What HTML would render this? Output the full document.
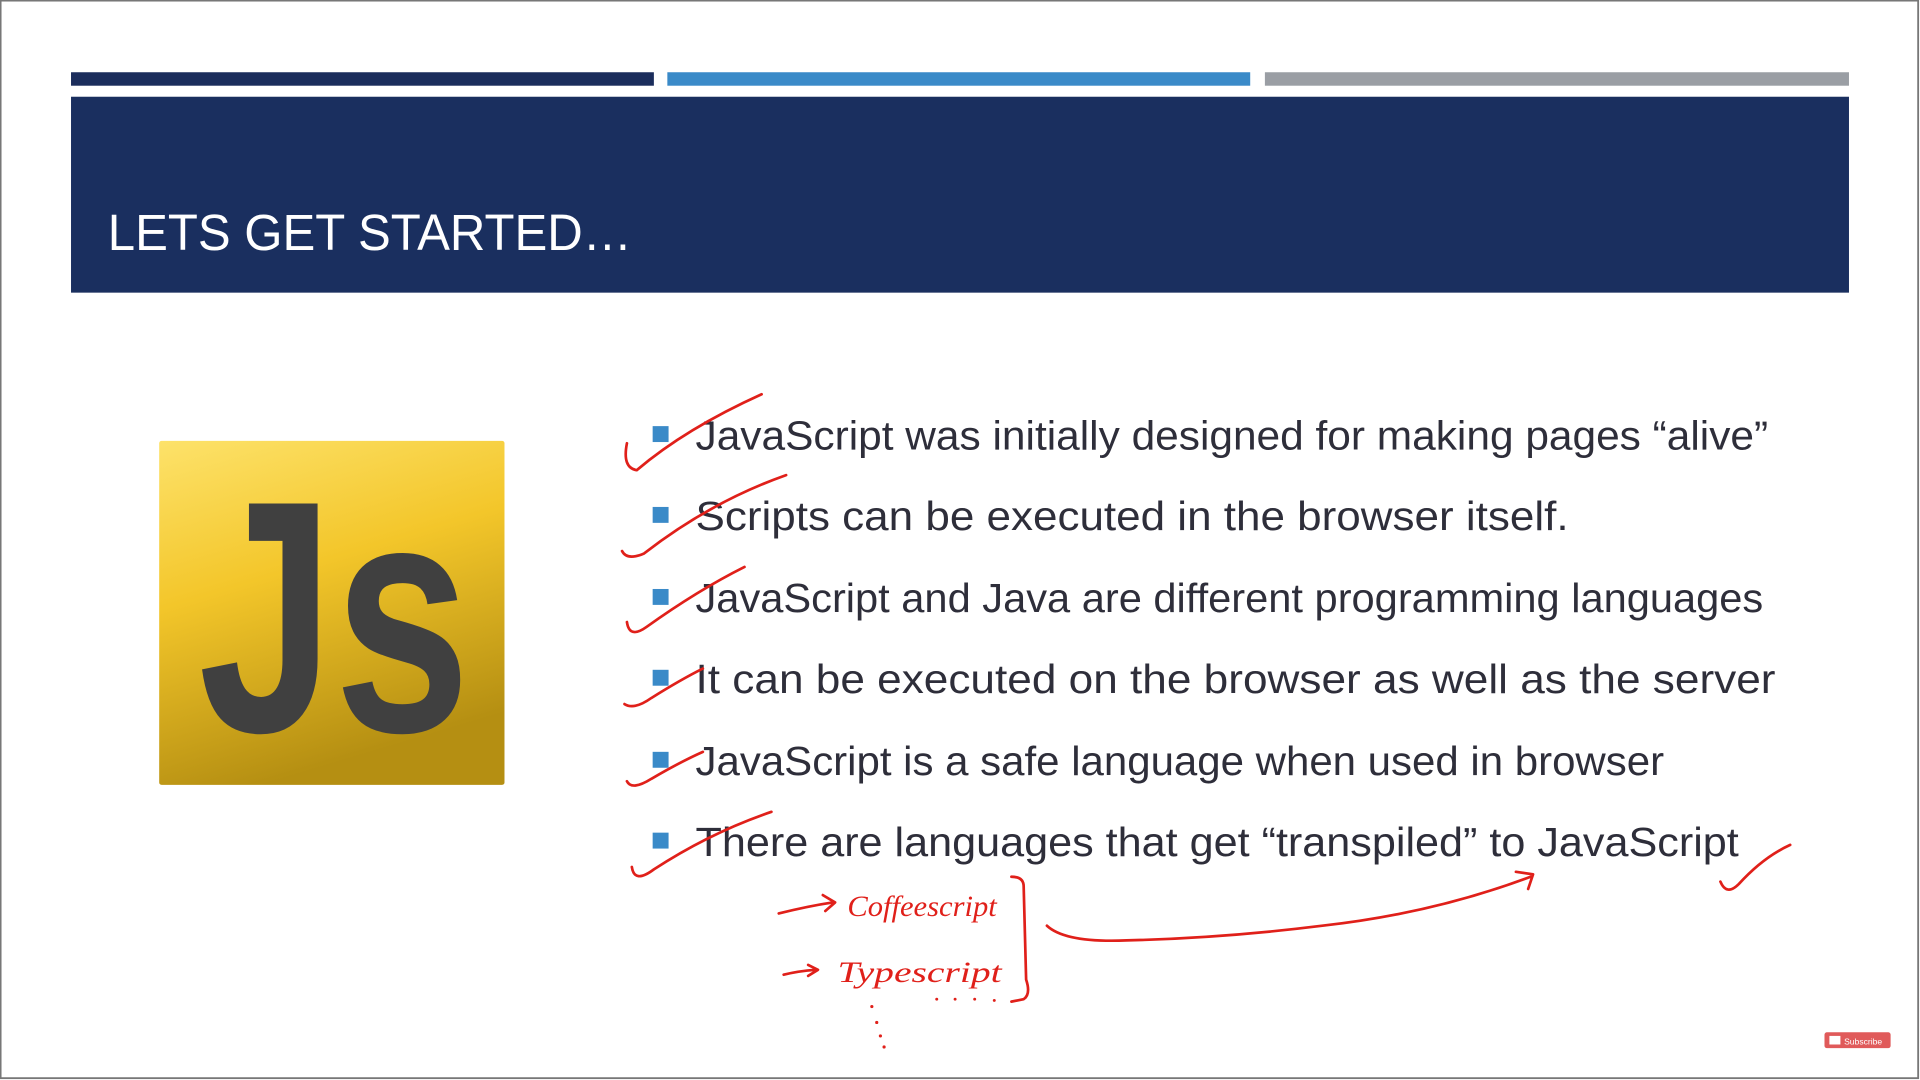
<!DOCTYPE html>
<html><head><meta charset="utf-8"><style>
html,body{margin:0;padding:0;background:#fff;width:1920px;height:1080px;overflow:hidden}
svg{display:block}
</style></head><body>
<svg width="1920" height="1080" viewBox="0 0 1568 882" xmlns="http://www.w3.org/2000/svg">
<defs>
<linearGradient id="yg" x1="0" y1="0" x2="0.3" y2="1">
<stop offset="0" stop-color="#fde26a"/><stop offset="0.45" stop-color="#f3c62a"/><stop offset="1" stop-color="#b58f12"/>
</linearGradient>
</defs>
<rect x="0" y="0" width="1568" height="882" fill="#fff"/>
<rect x="0.5" y="0.5" width="1566" height="880" fill="none" stroke="#777" stroke-width="1.5"/>
<rect x="58" y="59" width="476" height="11" fill="#1b2d5c"/>
<rect x="545" y="59" width="476" height="11" fill="#3a8ac8"/>
<rect x="1033" y="59" width="477" height="11" fill="#9a9ea4"/>
<rect x="58" y="79" width="1452" height="160" fill="#1a2f5f"/>
<text x="88" y="204" font-family="Liberation Sans, sans-serif" font-size="42" fill="#fff" textLength="428" lengthAdjust="spacingAndGlyphs">LETS GET STARTED…</text>
<rect x="130" y="360" width="282" height="281" fill="url(#yg)" rx="2"/>
<text x="162" y="597" font-family="Liberation Sans, sans-serif" font-weight="bold" font-size="270" fill="#404040" textLength="222" lengthAdjust="spacingAndGlyphs">Js</text>
<g fill="#3a8ac8">
<rect x="533" y="348" width="13" height="13"/>
<rect x="533" y="414" width="13" height="13"/>
<rect x="533" y="481" width="13" height="13"/>
<rect x="533" y="547" width="13" height="13"/>
<rect x="533" y="614" width="13" height="13"/>
<rect x="533" y="680" width="13" height="13"/>
</g>
<g font-family="Liberation Sans, sans-serif" font-size="33" fill="#2e2e3a">
<text x="568" y="367" textLength="876" lengthAdjust="spacingAndGlyphs">JavaScript was initially designed for making pages “alive”</text>
<text x="568" y="433" textLength="713" lengthAdjust="spacingAndGlyphs">Scripts can be executed in the browser itself.</text>
<text x="568" y="500" textLength="872" lengthAdjust="spacingAndGlyphs">JavaScript and Java are different programming languages</text>
<text x="568" y="566" textLength="882" lengthAdjust="spacingAndGlyphs">It can be executed on the browser as well as the server</text>
<text x="568" y="633" textLength="791" lengthAdjust="spacingAndGlyphs">JavaScript is a safe language when used in browser</text>
<text x="568" y="699" textLength="852" lengthAdjust="spacingAndGlyphs">There are languages that get “transpiled” to JavaScript</text>
</g>
<g fill="none" stroke="#e0201a" stroke-width="2.2" stroke-linecap="round" stroke-linejoin="round">
<path d="M512 362 Q508 382 520 384 Q560 350 622 322"/>
<path d="M508 450 Q512 458 526 452 Q580 410 642 388"/>
<path d="M512 508 Q514 522 528 512 Q570 482 608 463"/>
<path d="M510 575 Q518 580 532 570 Q556 555 574 546"/>
<path d="M512 638 Q516 646 532 636 Q556 622 574 614"/>
<path d="M516 708 Q518 722 534 710 Q580 680 630 663"/>
<path d="M1405 720 Q1410 732 1420 722 Q1440 700 1462 690"/>
<path d="M636 746 Q660 740 680 737 M672 731 L682 737 L674 744"/>
<path d="M640 796 Q652 793 666 792 M660 788 L668 792 L660 797"/>
<path d="M826 716 Q836 716 836 724 L838 800 Q842 812 836 816 L826 818"/>
<path d="M855 756 Q870 770 920 768 Q1000 766 1080 756 Q1170 746 1250 716 M1238 712 L1252 714 L1248 726"/>
</g>
<g font-family="Liberation Serif, serif" font-style="italic" font-size="24" fill="#e0201a">
<text x="692" y="748" textLength="122" lengthAdjust="spacingAndGlyphs">Coffeescript</text>
<text x="684" y="802" textLength="134" lengthAdjust="spacingAndGlyphs">Typescript</text>
</g>
<g fill="#e0201a">
<circle cx="712" cy="822" r="1.3"/><circle cx="716" cy="835" r="1.3"/><circle cx="719" cy="846" r="1.3"/><circle cx="722" cy="855" r="1.3"/>
<circle cx="765" cy="816" r="1.2"/><circle cx="780" cy="816" r="1.2"/><circle cx="796" cy="816" r="1.2"/><circle cx="812" cy="817" r="1.2"/>
</g>
<rect x="1490" y="843" width="54" height="13" rx="2" fill="#e05a5a"/>
<rect x="1494" y="846" width="9" height="7" fill="#fff"/>
<text x="1506" y="853" font-family="Liberation Sans, sans-serif" font-size="7" fill="#fff">Subscribe</text>
</svg>
</body></html>
